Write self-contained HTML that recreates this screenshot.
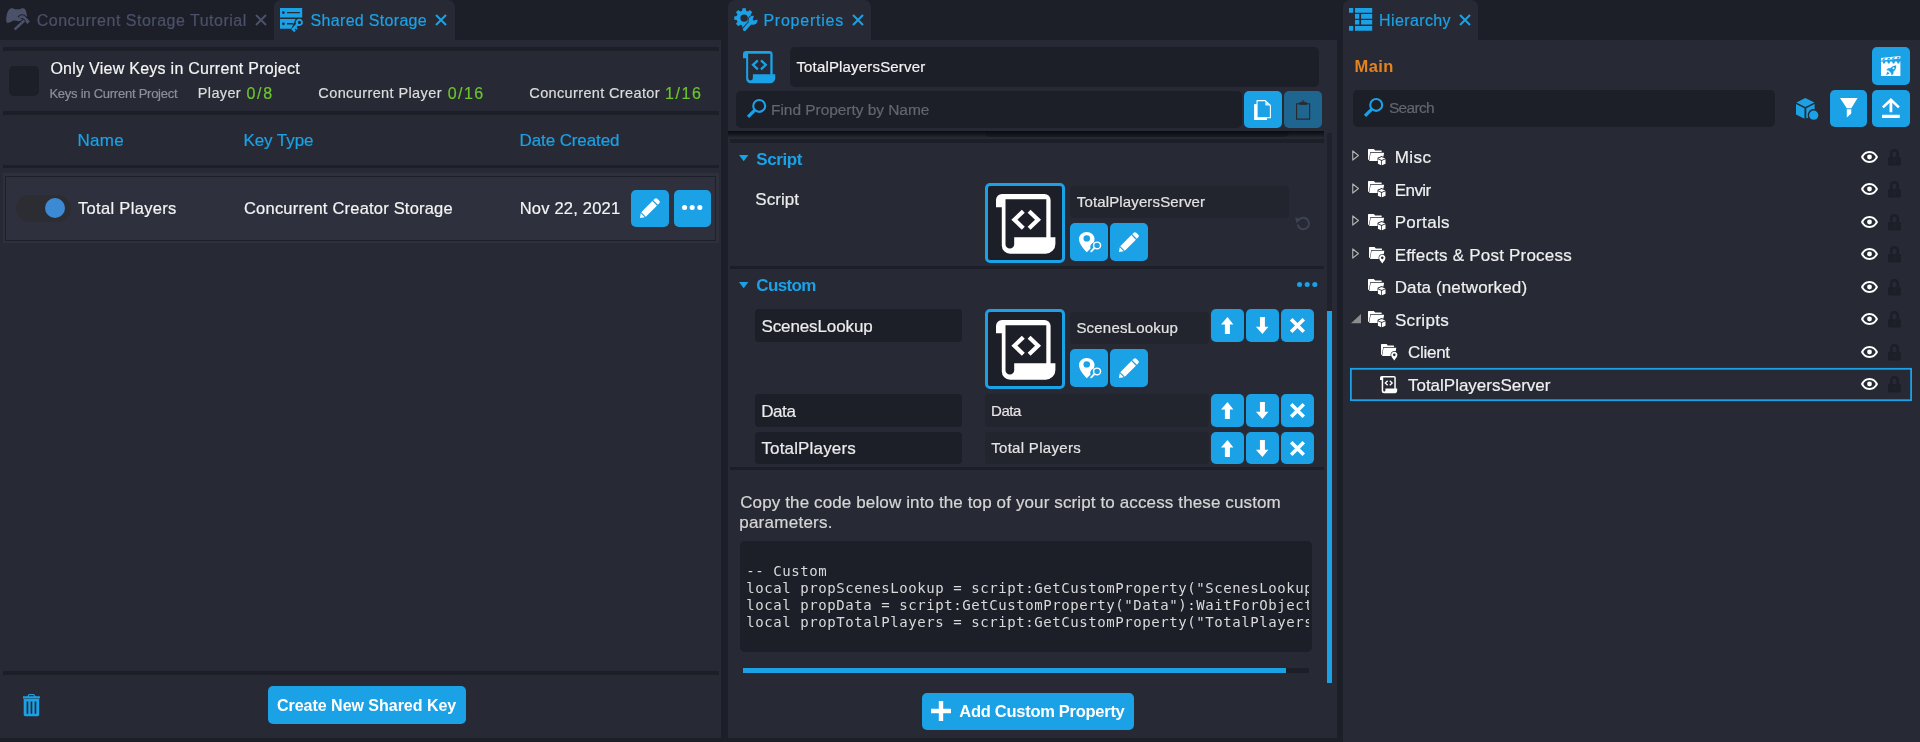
<!DOCTYPE html>
<html><head><meta charset="utf-8"><title>Editor</title>
<style>
html,body{margin:0;padding:0;}
body{width:1920px;height:742px;overflow:hidden;background:#1c1e28;position:relative;font-family:"Liberation Sans", sans-serif;}
#root{will-change:transform;position:absolute;left:0;top:0;width:1920px;height:742px;overflow:hidden;}
#root>div{position:absolute;box-sizing:border-box;}
#root>span{position:absolute;white-space:nowrap;line-height:20px;-webkit-text-stroke:0.2px;}
#root>svg{position:absolute;overflow:visible;}
#root>pre{position:absolute;margin:0;font-family:"DejaVu Sans Mono", "Liberation Mono", monospace;white-space:pre;overflow:hidden;}
</style></head><body><div id="root">
<div style="left:0px;top:40px;width:721px;height:698px;background:#272a34;"></div>
<div style="left:274px;top:0px;width:181px;height:41px;background:#272a34;border-radius:7px 7px 0 0;"></div>
<div style="left:3px;top:47px;width:716px;height:4px;background:#1c1e28;"></div>
<div style="left:3px;top:111px;width:716px;height:4px;background:#1c1e28;"></div>
<div style="left:3px;top:165px;width:716px;height:3px;background:#1c1e28;"></div>
<div style="left:3px;top:671px;width:716px;height:4px;background:#1c1e28;"></div>
<div style="left:9px;top:66px;width:30px;height:30px;background:#1c1e28;border-radius:5px;"></div>
<div style="left:3px;top:173px;width:716px;height:70px;background:#2e313c;"></div>
<div style="left:5.3px;top:176px;width:711.2px;height:65px;background:#2e313d;border:1.6px solid #1e2029;"></div>
<div style="left:16px;top:194.5px;width:55px;height:27.8px;background:#2c2d33;border-radius:14px;"></div>
<div style="left:44.9px;top:197.7px;width:20.6px;height:20.6px;background:#3c8ad3;border-radius:50%;"></div>
<div style="left:631px;top:190px;width:38px;height:37px;background:#1ba1e6;border-radius:5px;"></div>
<div style="left:674px;top:190px;width:37px;height:37px;background:#1ba1e6;border-radius:5px;"></div>
<div style="left:268px;top:686px;width:198px;height:38px;background:#1ba1e6;border-radius:5px;"></div>
<div style="left:728px;top:40px;width:609px;height:698px;background:#272a34;"></div>
<div style="left:728px;top:0px;width:143px;height:41px;background:#272a34;border-radius:7px 7px 0 0;"></div>
<div style="left:985px;top:120px;width:304px;height:16.6px;background:#1d1f29;border-radius:0 0 5px 5px;"></div>
<div style="left:728px;top:118px;width:600px;height:13px;background:#272a34;"></div>
<div style="left:728px;top:131px;width:596px;height:7px;background:transparent;background:linear-gradient(rgba(8,9,13,.9),rgba(8,9,13,.45) 55%,rgba(8,9,13,0));"></div>
<div style="left:790px;top:47px;width:529px;height:40px;background:#1c1e28;border-radius:5px;"></div>
<div style="left:736px;top:91px;width:506px;height:37px;background:#1c1e28;border-radius:5px;"></div>
<div style="left:1244px;top:91px;width:38px;height:37px;background:#1ba1e6;border-radius:5px;"></div>
<div style="left:1284px;top:91px;width:38px;height:37px;background:#1e6690;border-radius:5px;"></div>
<div style="left:730px;top:139px;width:594px;height:4px;background:#1c1e28;"></div>
<div style="left:730px;top:266px;width:594px;height:3px;background:#1c1e28;"></div>
<div style="left:730px;top:467px;width:594px;height:3px;background:#1c1e28;"></div>
<div style="left:1327px;top:133px;width:5px;height:178px;background:#1f212b;"></div>
<div style="left:1327px;top:311px;width:5px;height:372px;background:#1ba1e6;"></div>
<div style="left:985px;top:183px;width:80px;height:80px;background:#1c1e28;border:3px solid #1ba1e6;border-radius:5px;"></div>
<div style="left:985px;top:309px;width:80px;height:80px;background:#1c1e28;border:3px solid #1ba1e6;border-radius:5px;"></div>
<div style="left:1070px;top:186px;width:219px;height:32px;background:#22242e;border-radius:4px;"></div>
<div style="left:1070px;top:312px;width:139px;height:32px;background:#22242e;border-radius:4px;"></div>
<div style="left:1070px;top:223px;width:38px;height:38px;background:#1ba1e6;border-radius:5px;"></div>
<div style="left:1110px;top:223px;width:38px;height:38px;background:#1ba1e6;border-radius:5px;"></div>
<div style="left:1070px;top:349px;width:38px;height:38px;background:#1ba1e6;border-radius:5px;"></div>
<div style="left:1110px;top:349px;width:38px;height:38px;background:#1ba1e6;border-radius:5px;"></div>
<div style="left:755px;top:309px;width:207px;height:33px;background:#1c1e28;border-radius:4px;"></div>
<div style="left:1211px;top:309px;width:33px;height:33px;background:#1ba1e6;border-radius:5px;"></div>
<div style="left:1246px;top:309px;width:33px;height:33px;background:#1ba1e6;border-radius:5px;"></div>
<div style="left:1281px;top:309px;width:33px;height:33px;background:#1ba1e6;border-radius:5px;"></div>
<div style="left:755px;top:394px;width:207px;height:33px;background:#1c1e28;border-radius:4px;"></div>
<div style="left:1211px;top:394px;width:33px;height:33px;background:#1ba1e6;border-radius:5px;"></div>
<div style="left:1246px;top:394px;width:33px;height:33px;background:#1ba1e6;border-radius:5px;"></div>
<div style="left:1281px;top:394px;width:33px;height:33px;background:#1ba1e6;border-radius:5px;"></div>
<div style="left:755px;top:432px;width:207px;height:32px;background:#1c1e28;border-radius:4px;"></div>
<div style="left:1211px;top:432px;width:33px;height:32px;background:#1ba1e6;border-radius:5px;"></div>
<div style="left:1246px;top:432px;width:33px;height:32px;background:#1ba1e6;border-radius:5px;"></div>
<div style="left:1281px;top:432px;width:33px;height:32px;background:#1ba1e6;border-radius:5px;"></div>
<div style="left:985px;top:394px;width:224px;height:33px;background:#22242e;border-radius:4px;"></div>
<div style="left:985px;top:432px;width:224px;height:32px;background:#22242e;border-radius:4px;"></div>
<div style="left:740px;top:541px;width:572px;height:111px;background:#1c1e28;border-radius:5px;"></div>
<div style="left:743px;top:668px;width:566px;height:5px;background:#1c1e28;"></div>
<div style="left:743px;top:668px;width:543px;height:5px;background:#1ba1e6;"></div>
<div style="left:922px;top:693px;width:212px;height:37px;background:#1ba1e6;border-radius:5px;"></div>
<div style="left:1343px;top:40px;width:577px;height:702px;background:#272a34;"></div>
<div style="left:1343px;top:0px;width:135px;height:41px;background:#272a34;border-radius:7px 7px 0 0;"></div>
<div style="left:1872px;top:47px;width:38px;height:38px;background:#1ba1e6;border-radius:5px;"></div>
<div style="left:1353px;top:90px;width:422px;height:37px;background:#1c1e28;border-radius:5px;"></div>
<div style="left:1830px;top:90px;width:37px;height:37px;background:#1ba1e6;border-radius:5px;"></div>
<div style="left:1872px;top:90px;width:38px;height:37px;background:#1ba1e6;border-radius:5px;"></div>
<pre style="left:746.2px;top:563px;width:562.8px;height:72px;font-size:14px;letter-spacing:0.571px;line-height:17px;color:#dadada;">-- Custom
local propScenesLookup = script:GetCustomProperty("ScenesLookup"):WaitForObject()
local propData = script:GetCustomProperty("Data"):WaitForObject()
local propTotalPlayers = script:GetCustomProperty("TotalPlayers")</pre>
<svg style="left:1349px;top:366px;width:565px;height:37px;" viewBox="1349 366 565 37"><rect x="1350.9" y="368.8" width="560.2" height="31.4" fill="none" stroke="#1ba1e6" stroke-width="1.8"/></svg>
<svg style="left:5.9px;top:8.3px;width:24px;height:22px;color:#4b5169;" viewBox="0 0 24 22" preserveAspectRatio="none" fill="currentColor"><path d="M4.5 0.6 C6.5 -0.2 8 0.8 8.6 1.2 L14.2 1.2 C15 0.5 16.8 -0.2 18.3 0.6 C20.3 2 20.9 6.5 21.1 10.4 L17.5 12.6 L12 13.2 C10.4 12.4 7.8 12.4 6.5 13 C4.8 13.9 3.2 14.9 1.5 14.9 C-0.5 14.3 0.2 8.5 1.2 5.2 C1.8 3.2 3 1.3 4.5 0.6 Z"/><g fill="none" stroke="#1c1e28"><path d="M8.6 21.5 L18.3 12.5" stroke-width="4.4"/><path d="M13.7 10 C14.6 8.3 17 8.2 18.4 9.6 L22.2 13.4" stroke-width="4.6"/></g><g fill="none" stroke="currentColor"><path d="M8.6 21.5 L18.3 12.5" stroke-width="2.5"/><path d="M13.7 10 C14.6 8.3 17 8.2 18.4 9.6 L21.4 12.6" stroke-width="2.6"/></g><path d="M21.7 11.2 L23.9 13.4 L21.4 15.9 L19.2 13.7 Z"/></svg>
<svg style="left:280px;top:8px;width:23px;height:25px;color:#1ba1e6;" viewBox="0 0 23 25" preserveAspectRatio="none" fill="currentColor"><path fill-rule="evenodd" d="M0 0 H22.2 V9.4 H0 Z M2 4.6 a1.4 1.4 0 1 0 2.8 0 a1.4 1.4 0 1 0 -2.8 0 Z M7 3.9 H19.8 V5.3 H7 Z"/><path fill-rule="evenodd" d="M0 11.1 H15.6 L14.2 14.6 L11.2 20.7 H0 Z M2 15.8 a1.4 1.4 0 1 0 2.8 0 a1.4 1.4 0 1 0 -2.8 0 Z M7 15.1 H13.2 V16.5 H7 Z"/><path fill-rule="evenodd" d="M19.4 10.8 a3.6 3.6 0 1 1 -1.5 6.9 L16.6 19.2 L17.8 20.4 L16.5 21.7 L15.3 20.6 L14.6 21.4 L15.8 22.6 L14.3 24.2 L11.2 21.2 L16 16 A3.6 3.6 0 0 1 19.4 10.8 Z M19.5 12.8 a1.6 1.6 0 1 0 0 3.2 a1.6 1.6 0 1 0 0 -3.2 Z"/></svg>
<svg style="left:254.6px;top:13.5px;width:12px;height:12px;color:#4b5169;" viewBox="0 0 12 12" preserveAspectRatio="none" fill="currentColor"><path d="M1 1 L11 11 M11 1 L1 11" stroke="currentColor" stroke-width="2" fill="none"/></svg>
<svg style="left:434.6px;top:13.5px;width:12px;height:12px;color:#1ba1e6;" viewBox="0 0 12 12" preserveAspectRatio="none" fill="currentColor"><path d="M1 1 L11 11 M11 1 L1 11" stroke="currentColor" stroke-width="2" fill="none"/></svg>
<svg style="left:640px;top:198px;width:20px;height:20px;color:#fff;" viewBox="0 0 22 22" preserveAspectRatio="none" fill="currentColor"><path d="M16.2 0.8 C17 0 18.2 0 19 0.8 L21.2 3 C22 3.8 22 5 21.2 5.8 L19.6 7.4 L14.6 2.4 Z M13.6 3.4 L18.6 8.4 L6.4 20.6 L1.4 15.6 Z M0.8 16.8 L5.2 21.2 L0 22 Z"/></svg>
<svg style="left:681.8px;top:205.2px;width:20.4px;height:5px;color:#fff;" viewBox="0 0 20 5" preserveAspectRatio="none" fill="currentColor"><circle cx="2.5" cy="2.5" r="2.5"/><circle cx="10" cy="2.5" r="2.5"/><circle cx="17.5" cy="2.5" r="2.5"/></svg>
<svg style="left:23.3px;top:693.8px;width:16.9px;height:22.2px;color:#1ba1e6;" viewBox="0 0 16.9 22.2" preserveAspectRatio="none" fill="currentColor"><path fill-rule="evenodd" d="M5.9 0 H11 L12.6 2.2 H16.9 V4.5 H0 V2.2 H4.3 Z M6.5 1 L5.8 2.2 H11.1 L10.4 1 Z M0.7 5.1 H16.2 V20.6 C16.2 21.6 15.6 22.2 14.6 22.2 H2.3 C1.3 22.2 0.7 21.6 0.7 20.6 Z M3.6 7.4 V19.8 H5.3 V7.4 Z M7.6 7.4 V19.8 H9.3 V7.4 Z M11.6 7.4 V19.8 H13.3 V7.4 Z"/></svg>
<svg style="left:995.8px;top:193.5px;width:59.5px;height:59.7px;color:#fff;" viewBox="0 0 59.5 59.7" preserveAspectRatio="none" fill="currentColor"><path fill-rule="evenodd" d="M6 0 H48.5 A6.1 6.1 0 0 1 54.6 6.1 V43.3 H59.4 V50 A9.7 9.7 0 0 1 49.7 59.7 H14 A8.2 8.2 0 0 1 5.8 51.5 V13.3 H0 V6 A6 6 0 0 1 6 0 Z M9.5 5.3 V50.2 A4.35 4.35 0 0 0 18.2 50.2 V43.3 H50.3 V5.3 Z"/><path d="M27.3 17.3 L18.4 25.7 L27.3 34.2 M33.1 17.3 L42 25.7 L33.1 34.2" fill="none" stroke="currentColor" stroke-width="4.2"/></svg>
<svg style="left:995.8px;top:319.5px;width:59.5px;height:59.7px;color:#fff;" viewBox="0 0 59.5 59.7" preserveAspectRatio="none" fill="currentColor"><path fill-rule="evenodd" d="M6 0 H48.5 A6.1 6.1 0 0 1 54.6 6.1 V43.3 H59.4 V50 A9.7 9.7 0 0 1 49.7 59.7 H14 A8.2 8.2 0 0 1 5.8 51.5 V13.3 H0 V6 A6 6 0 0 1 6 0 Z M9.5 5.3 V50.2 A4.35 4.35 0 0 0 18.2 50.2 V43.3 H50.3 V5.3 Z"/><path d="M27.3 17.3 L18.4 25.7 L27.3 34.2 M33.1 17.3 L42 25.7 L33.1 34.2" fill="none" stroke="currentColor" stroke-width="4.2"/></svg>
<svg style="left:1079px;top:232px;width:23.3px;height:20.2px;color:#fff;" viewBox="0 0 24 22" preserveAspectRatio="none" fill="currentColor"><path fill-rule="evenodd" d="M8 0 C12.4 0 16 3.4 16 7.6 C16 9 15.6 10.4 15 11.6 C13 12.2 11.6 14 11.6 16.2 C11.6 16.8 11.7 17.4 11.9 17.9 L8 22 C5 18.6 0 13 0 7.6 C0 3.4 3.6 0 8 0 Z M8 3.6 a3.4 3.4 0 1 0 0 6.8 a3.4 3.4 0 1 0 0 -6.8 Z"/><circle cx="18.6" cy="14.6" r="3.6" fill="none" stroke="currentColor" stroke-width="1.5"/><path d="M16 17.4 L12.6 21" stroke="currentColor" stroke-width="2" stroke-linecap="round"/></svg>
<svg style="left:1119px;top:232px;width:20px;height:20px;color:#fff;" viewBox="0 0 22 22" preserveAspectRatio="none" fill="currentColor"><path d="M16.2 0.8 C17 0 18.2 0 19 0.8 L21.2 3 C22 3.8 22 5 21.2 5.8 L19.6 7.4 L14.6 2.4 Z M13.6 3.4 L18.6 8.4 L6.4 20.6 L1.4 15.6 Z M0.8 16.8 L5.2 21.2 L0 22 Z"/></svg>
<svg style="left:1079px;top:358px;width:23.3px;height:20.2px;color:#fff;" viewBox="0 0 24 22" preserveAspectRatio="none" fill="currentColor"><path fill-rule="evenodd" d="M8 0 C12.4 0 16 3.4 16 7.6 C16 9 15.6 10.4 15 11.6 C13 12.2 11.6 14 11.6 16.2 C11.6 16.8 11.7 17.4 11.9 17.9 L8 22 C5 18.6 0 13 0 7.6 C0 3.4 3.6 0 8 0 Z M8 3.6 a3.4 3.4 0 1 0 0 6.8 a3.4 3.4 0 1 0 0 -6.8 Z"/><circle cx="18.6" cy="14.6" r="3.6" fill="none" stroke="currentColor" stroke-width="1.5"/><path d="M16 17.4 L12.6 21" stroke="currentColor" stroke-width="2" stroke-linecap="round"/></svg>
<svg style="left:1119px;top:358px;width:20px;height:20px;color:#fff;" viewBox="0 0 22 22" preserveAspectRatio="none" fill="currentColor"><path d="M16.2 0.8 C17 0 18.2 0 19 0.8 L21.2 3 C22 3.8 22 5 21.2 5.8 L19.6 7.4 L14.6 2.4 Z M13.6 3.4 L18.6 8.4 L6.4 20.6 L1.4 15.6 Z M0.8 16.8 L5.2 21.2 L0 22 Z"/></svg>
<svg style="left:1211px;top:309.0px;width:33px;height:33px;color:#fff;" viewBox="0 0 33 33" preserveAspectRatio="none" fill="currentColor"><path d="M16.5 8 L22.4 15.4 H18.9 V24.9 H13.9 V15.4 H10 Z"/></svg>
<svg style="left:1246px;top:309.0px;width:33px;height:33px;color:#fff;" viewBox="0 0 33 33" preserveAspectRatio="none" fill="currentColor"><path d="M16.4 24.9 L22.4 17.7 H18.9 V8 H13.95 V17.7 H9.9 Z"/></svg>
<svg style="left:1281px;top:309.0px;width:33px;height:33px;color:#fff;" viewBox="0 0 33 33" preserveAspectRatio="none" fill="currentColor"><path d="M10.15 10.25 L22.75 22.85 M22.75 10.25 L10.15 22.85" stroke="currentColor" stroke-width="3.6" fill="none"/></svg>
<svg style="left:1211px;top:394.0px;width:33px;height:33px;color:#fff;" viewBox="0 0 33 33" preserveAspectRatio="none" fill="currentColor"><path d="M16.5 8 L22.4 15.4 H18.9 V24.9 H13.9 V15.4 H10 Z"/></svg>
<svg style="left:1246px;top:394.0px;width:33px;height:33px;color:#fff;" viewBox="0 0 33 33" preserveAspectRatio="none" fill="currentColor"><path d="M16.4 24.9 L22.4 17.7 H18.9 V8 H13.95 V17.7 H9.9 Z"/></svg>
<svg style="left:1281px;top:394.0px;width:33px;height:33px;color:#fff;" viewBox="0 0 33 33" preserveAspectRatio="none" fill="currentColor"><path d="M10.15 10.25 L22.75 22.85 M22.75 10.25 L10.15 22.85" stroke="currentColor" stroke-width="3.6" fill="none"/></svg>
<svg style="left:1211px;top:431.5px;width:33px;height:33px;color:#fff;" viewBox="0 0 33 33" preserveAspectRatio="none" fill="currentColor"><path d="M16.5 8 L22.4 15.4 H18.9 V24.9 H13.9 V15.4 H10 Z"/></svg>
<svg style="left:1246px;top:431.5px;width:33px;height:33px;color:#fff;" viewBox="0 0 33 33" preserveAspectRatio="none" fill="currentColor"><path d="M16.4 24.9 L22.4 17.7 H18.9 V8 H13.95 V17.7 H9.9 Z"/></svg>
<svg style="left:1281px;top:431.5px;width:33px;height:33px;color:#fff;" viewBox="0 0 33 33" preserveAspectRatio="none" fill="currentColor"><path d="M10.15 10.25 L22.75 22.85 M22.75 10.25 L10.15 22.85" stroke="currentColor" stroke-width="3.6" fill="none"/></svg>
<svg style="left:734px;top:8px;width:24px;height:24px;color:#1ba1e6;" viewBox="0 0 24 24" preserveAspectRatio="none" fill="currentColor"><path fill-rule="evenodd" d="M8.12 2.66 L8.41 0.24 L11.79 0.24 L12.08 2.66 L13.96 3.44 L15.87 1.93 L18.27 4.33 L16.76 6.24 L17.54 8.12 L19.96 8.41 L19.96 11.79 L17.54 12.08 L16.76 13.96 L18.27 15.87 L15.87 18.27 L13.96 16.76 L12.08 17.54 L11.79 19.96 L8.41 19.96 L8.12 17.54 L6.24 16.76 L4.33 18.27 L1.93 15.87 L3.44 13.96 L2.66 12.08 L0.24 11.79 L0.24 8.41 L2.66 8.12 L3.44 6.24 L1.93 4.33 L4.33 1.93 L6.24 3.44 Z M6.40 10.10 a3.7 3.7 0 1 0 7.4 0 a3.7 3.7 0 1 0 -7.4 0 Z"/><g stroke="#272a34" stroke-width="1.6" fill="#272a34"><path d="M10.5 21.3 L18 13" stroke-width="5" stroke-linecap="round" fill="none"/><circle cx="19" cy="12.2" r="4.6"/></g><path d="M10.5 21.3 L18 13" stroke="currentColor" stroke-width="3.4" stroke-linecap="round" fill="none"/><circle cx="19" cy="12.2" r="4.5"/><path d="M19.6 11.6 L21.2 6.4 L25.4 10.2 Z" fill="#272a34" stroke="#272a34" stroke-width="1.6" stroke-linejoin="round"/></svg>
<svg style="left:851.5px;top:13.5px;width:12px;height:12px;color:#1ba1e6;" viewBox="0 0 12 12" preserveAspectRatio="none" fill="currentColor"><path d="M1 1 L11 11 M11 1 L1 11" stroke="currentColor" stroke-width="2" fill="none"/></svg>
<svg style="left:742.9px;top:50.9px;width:32.3px;height:32.2px;color:#1ba1e6;" viewBox="0 0 59.5 59.7" preserveAspectRatio="none" fill="currentColor"><path fill-rule="evenodd" d="M6 0 H48.5 A6.1 6.1 0 0 1 54.6 6.1 V43.3 H59.4 V50 A9.7 9.7 0 0 1 49.7 59.7 H14 A8.2 8.2 0 0 1 5.8 51.5 V13.3 H0 V6 A6 6 0 0 1 6 0 Z M9.5 5.3 V50.2 A4.35 4.35 0 0 0 18.2 50.2 V43.3 H50.3 V5.3 Z"/><path d="M27.3 17.3 L18.4 25.7 L27.3 34.2 M33.1 17.3 L42 25.7 L33.1 34.2" fill="none" stroke="currentColor" stroke-width="4.2"/></svg>
<svg style="left:747px;top:98px;width:20px;height:20px;color:#1ba1e6;" viewBox="0 0 20 20" preserveAspectRatio="none" fill="currentColor"><circle cx="12.2" cy="7.9" r="5.95" fill="none" stroke="currentColor" stroke-width="2.1"/><path d="M7.6 12.4 L1 18.9" stroke="currentColor" stroke-width="3.3" fill="none"/></svg>
<svg style="left:1254px;top:100px;width:17px;height:20px;color:#fff;" viewBox="0 0 17 20" preserveAspectRatio="none" fill="currentColor"><path d="M0.1 4.1 H12.9 V20 H0.1 Z"/><path d="M3.05 0.65 H11.3 L16.4 5.5 V17.7 H3.05 Z" fill="#1ba1e6" stroke="currentColor" stroke-width="1.1" stroke-linejoin="round"/><path d="M11.3 0.9 V5.5 H16.2 Z" fill="rgba(255,255,255,.8)"/></svg>
<svg style="left:1296px;top:100px;width:15px;height:20px;color:#2a292e;" viewBox="0 0 15 20" preserveAspectRatio="none" fill="currentColor"><path d="M0.6 3.7 H13.6 V19.1 H0.6 Z" fill="none" stroke="currentColor" stroke-width="1.15"/><path d="M3.2 2.2 H11 V4.8 H3.2 Z"/><circle cx="7.1" cy="1.4" r="0.95" fill="none" stroke="currentColor" stroke-width="0.8"/></svg>
<svg style="left:739.3px;top:154.9px;width:9.4px;height:6.3px;color:#1ba1e6;" viewBox="0 0 10 7" preserveAspectRatio="none" fill="currentColor"><path d="M0 0 H10 L5 7 Z"/></svg>
<svg style="left:739.3px;top:281.7px;width:9.4px;height:6.3px;color:#1ba1e6;" viewBox="0 0 10 7" preserveAspectRatio="none" fill="currentColor"><path d="M0 0 H10 L5 7 Z"/></svg>
<svg style="left:1294.9px;top:215.7px;width:15.2px;height:14.4px;color:#3d4254;" viewBox="0 0 15.2 14.4" preserveAspectRatio="none" fill="currentColor"><path d="M3.63 4.23 A5.7 5.7 0 1 1 2.69 8.49" fill="none" stroke="currentColor" stroke-width="1.9"/><path d="M0.2 1.2 L5.8 3.3 L1.5 7.2 Z"/></svg>
<svg style="left:1296.7px;top:282px;width:20.4px;height:5px;color:#1ba1e6;" viewBox="0 0 20 5" preserveAspectRatio="none" fill="currentColor"><circle cx="2.5" cy="2.5" r="2.5"/><circle cx="10" cy="2.5" r="2.5"/><circle cx="17.5" cy="2.5" r="2.5"/></svg>
<svg style="left:931px;top:701px;width:20px;height:20px;color:#fff;" viewBox="0 0 20 20" preserveAspectRatio="none" fill="currentColor"><path d="M7.8 0 H12.2 V7.8 H20 V12.2 H12.2 V20 H7.8 V12.2 H0 V7.8 H7.8 Z"/></svg>
<svg style="left:1348.9px;top:8.1px;width:23.2px;height:22.7px;color:#1ba1e6;" viewBox="0 0 23.2 22.7" preserveAspectRatio="none" fill="currentColor"><path d="M0 0 H4.2 V4.8 H0 Z M6 0 H23.2 V4.8 H6 Z M6 6.1 H10.3 V10.7 H6 Z M12.1 6.1 H23.2 V10.7 H12.1 Z M6 12 H10.3 V16.6 H6 Z M12.1 12 H23.2 V16.6 H12.1 Z M0 18 H4.2 V22.7 H0 Z M6 18 H23.2 V22.7 H6 Z"/></svg>
<svg style="left:1458.8px;top:13.5px;width:12px;height:12px;color:#1ba1e6;" viewBox="0 0 12 12" preserveAspectRatio="none" fill="currentColor"><path d="M1 1 L11 11 M11 1 L1 11" stroke="currentColor" stroke-width="2" fill="none"/></svg>
<svg style="left:1880.8px;top:56px;width:19.4px;height:20px;color:#fff;" viewBox="0 0 19.4 20" preserveAspectRatio="none" fill="currentColor"><path fill-rule="evenodd" d="M0 1.9 L19.4 -0.1 V2.5 L0 4.5 Z M2.20 2.47 L4.60 2.23 L3.60 3.83 L1.20 4.08 Z M7.00 1.98 L9.40 1.73 L8.40 3.33 L6.00 3.58 Z M11.80 1.48 L14.20 1.24 L13.20 2.84 L10.80 3.09 Z M16.60 0.99 L19.00 0.74 L18.00 2.34 L15.60 2.59 Z"/><path fill-rule="evenodd" d="M0 5.6 H19.4 V20 H0 Z M1.50 5.4 L2.20 7.6 H3.70 L4.40 5.4 Z M6.30 5.4 L7.00 7.6 H8.50 L9.20 5.4 Z M11.10 5.4 L11.80 7.6 H13.30 L14.00 5.4 Z M15.90 5.4 L16.60 7.6 H18.10 L18.80 5.4 Z M15.2 9.4 C12.8 9.3 10.6 10.4 9.3 12.2 L7 12.3 L5.3 14.3 L7.6 14.6 L10.2 17.2 L10.5 19.4 L12.4 17.8 L12.5 15.5 C14.4 14.2 15.5 12 15.2 9.4 Z M12.5 11.2 a1 1 0 1 0 0 2 a1 1 0 1 0 0 -2 Z M6.6 15.6 L5 19 L8.6 17.8 Z"/></svg>
<svg style="left:1364px;top:97px;width:20px;height:20px;color:#1ba1e6;" viewBox="0 0 20 20" preserveAspectRatio="none" fill="currentColor"><circle cx="12.2" cy="7.9" r="5.95" fill="none" stroke="currentColor" stroke-width="2.1"/><path d="M7.6 12.4 L1 18.9" stroke="currentColor" stroke-width="3.3" fill="none"/></svg>
<svg style="left:1795.7px;top:97.5px;width:22.3px;height:21.9px;color:#1ba1e6;" viewBox="0 0 22.3 21.9" preserveAspectRatio="none" fill="currentColor"><path d="M9.3 0 L18.4 4.6 L9.3 9 L0.4 4.6 Z M0 6 L8.5 10.3 V20.8 L0 16.4 Z M10.3 10.3 L18.6 6 V11.2 C15 10.6 11.8 13.4 11.8 17.2 C11.8 18 11.9 18.6 12.2 19.4 L10.3 20.6 Z"/><circle cx="17.7" cy="17.2" r="4.6"/></svg>
<svg style="left:1839.8px;top:98px;width:17.6px;height:19.4px;color:#fff;" viewBox="0 0 17.6 19.4" preserveAspectRatio="none" fill="currentColor"><path d="M0 0 H17.6 L11.3 10.2 H6.8 Z M6.8 11.3 H11.3 V15.6 L6.8 19.4 Z"/></svg>
<svg style="left:1882px;top:98px;width:17.8px;height:20px;color:#fff;" viewBox="0 0 17.8 20" preserveAspectRatio="none" fill="currentColor"><path d="M0.9 9.4 L8.9 1.8 L16.9 9.4" fill="none" stroke="currentColor" stroke-width="2.6"/><path d="M7.5 2.5 H10.3 V14.3 H7.5 Z M0 16.8 H17.8 V20 H0 Z"/></svg>
<svg style="left:1352px;top:150.3px;width:7.4px;height:11px;color:#b4b4b4;" viewBox="0 0 8 11" preserveAspectRatio="none" fill="currentColor"><path d="M0.8 0.9 L7 5.5 L0.8 10.1 Z" fill="none" stroke="currentColor" stroke-width="1.2" stroke-linejoin="round"/></svg>
<svg style="left:1368.0px;top:148.8px;width:17.5px;height:16.5px;color:#fff;" viewBox="0 0 18 17" preserveAspectRatio="none" fill="currentColor"><path d="M0 0.6 C0 0.2 0.3 0 0.6 0 H6 L7.4 1.6 H14 V3 H2.4 L1 11 H0 Z"/><path d="M2.8 3.8 H16.6 L15.8 8 L14 7.2 L9.8 9 V12.4 H1.2 Z"/><path d="M14 8.2 L17.8 9.8 L14 11.4 L10.4 9.8 Z M10.2 10.6 L13.6 12.2 V16.8 L10.2 15.2 Z M14.4 12.2 L18 10.6 V15.2 L14.4 16.8 Z"/></svg>
<svg style="left:1861px;top:151.2px;width:17px;height:12px;color:#fff;" viewBox="0 0 17 12" preserveAspectRatio="none" fill="currentColor"><path fill-rule="evenodd" d="M8.5 0 C12.6 0 15.6 2.8 17 6 C15.6 9.2 12.6 12 8.5 12 C4.4 12 1.4 9.2 0 6 C1.4 2.8 4.4 0 8.5 0 Z M8.5 2 C5.8 2 3.4 3.6 2.3 6 C3.4 8.4 5.8 10 8.5 10 C11.2 10 13.6 8.4 14.7 6 C13.6 3.6 11.2 2 8.5 2 Z"/><circle cx="8.5" cy="6" r="2.4"/></svg>
<svg style="left:1888.1px;top:149.2px;width:12.9px;height:16.6px;color:#1c1e28;" viewBox="0 0 12.9 16.6" preserveAspectRatio="none" fill="currentColor"><path fill-rule="evenodd" d="M6.45 0 C9.2 0 11 1.9 11 4.6 V8.3 H1.9 V4.6 C1.9 1.9 3.7 0 6.45 0 Z M6.45 2.5 C5.2 2.5 4.5 3.4 4.5 4.7 V8.3 H8.4 V4.7 C8.4 3.4 7.7 2.5 6.45 2.5 Z"/><path fill-rule="evenodd" d="M1.4 8 H11.5 C12.3 8 12.9 8.6 12.9 9.4 V15.2 C12.9 16 12.3 16.6 11.5 16.6 H1.4 C0.6 16.6 0 16 0 15.2 V9.4 C0 8.6 0.6 8 1.4 8 Z"/><path d="M6.45 10.2 a1.1 1.1 0 0 1 0.55 2.05 V14.6 H5.9 V12.25 A1.1 1.1 0 0 1 6.45 10.2 Z" fill="#272a34" opacity=".55"/></svg>
<svg style="left:1352px;top:182.8px;width:7.4px;height:11px;color:#b4b4b4;" viewBox="0 0 8 11" preserveAspectRatio="none" fill="currentColor"><path d="M0.8 0.9 L7 5.5 L0.8 10.1 Z" fill="none" stroke="currentColor" stroke-width="1.2" stroke-linejoin="round"/></svg>
<svg style="left:1368.0px;top:181.3px;width:17.5px;height:16.5px;color:#fff;" viewBox="0 0 18 17" preserveAspectRatio="none" fill="currentColor"><path d="M0 0.6 C0 0.2 0.3 0 0.6 0 H6 L7.4 1.6 H14 V3 H2.4 L1 11 H0 Z"/><path d="M2.8 3.8 H16.6 L15.8 8 L14 7.2 L9.8 9 V12.4 H1.2 Z"/><path d="M14 8.2 L17.8 9.8 L14 11.4 L10.4 9.8 Z M10.2 10.6 L13.6 12.2 V16.8 L10.2 15.2 Z M14.4 12.2 L18 10.6 V15.2 L14.4 16.8 Z"/></svg>
<svg style="left:1861px;top:183.2px;width:17px;height:12px;color:#fff;" viewBox="0 0 17 12" preserveAspectRatio="none" fill="currentColor"><path fill-rule="evenodd" d="M8.5 0 C12.6 0 15.6 2.8 17 6 C15.6 9.2 12.6 12 8.5 12 C4.4 12 1.4 9.2 0 6 C1.4 2.8 4.4 0 8.5 0 Z M8.5 2 C5.8 2 3.4 3.6 2.3 6 C3.4 8.4 5.8 10 8.5 10 C11.2 10 13.6 8.4 14.7 6 C13.6 3.6 11.2 2 8.5 2 Z"/><circle cx="8.5" cy="6" r="2.4"/></svg>
<svg style="left:1888.1px;top:181.2px;width:12.9px;height:16.6px;color:#1c1e28;" viewBox="0 0 12.9 16.6" preserveAspectRatio="none" fill="currentColor"><path fill-rule="evenodd" d="M6.45 0 C9.2 0 11 1.9 11 4.6 V8.3 H1.9 V4.6 C1.9 1.9 3.7 0 6.45 0 Z M6.45 2.5 C5.2 2.5 4.5 3.4 4.5 4.7 V8.3 H8.4 V4.7 C8.4 3.4 7.7 2.5 6.45 2.5 Z"/><path fill-rule="evenodd" d="M1.4 8 H11.5 C12.3 8 12.9 8.6 12.9 9.4 V15.2 C12.9 16 12.3 16.6 11.5 16.6 H1.4 C0.6 16.6 0 16 0 15.2 V9.4 C0 8.6 0.6 8 1.4 8 Z"/><path d="M6.45 10.2 a1.1 1.1 0 0 1 0.55 2.05 V14.6 H5.9 V12.25 A1.1 1.1 0 0 1 6.45 10.2 Z" fill="#272a34" opacity=".55"/></svg>
<svg style="left:1352px;top:215.3px;width:7.4px;height:11px;color:#b4b4b4;" viewBox="0 0 8 11" preserveAspectRatio="none" fill="currentColor"><path d="M0.8 0.9 L7 5.5 L0.8 10.1 Z" fill="none" stroke="currentColor" stroke-width="1.2" stroke-linejoin="round"/></svg>
<svg style="left:1368.0px;top:213.8px;width:17.5px;height:16.5px;color:#fff;" viewBox="0 0 18 17" preserveAspectRatio="none" fill="currentColor"><path d="M0 0.6 C0 0.2 0.3 0 0.6 0 H6 L7.4 1.6 H14 V3 H2.4 L1 11 H0 Z"/><path d="M2.8 3.8 H16.6 L15.8 8 L14 7.2 L9.8 9 V12.4 H1.2 Z"/><path d="M14 8.2 L17.8 9.8 L14 11.4 L10.4 9.8 Z M10.2 10.6 L13.6 12.2 V16.8 L10.2 15.2 Z M14.4 12.2 L18 10.6 V15.2 L14.4 16.8 Z"/></svg>
<svg style="left:1861px;top:216.2px;width:17px;height:12px;color:#fff;" viewBox="0 0 17 12" preserveAspectRatio="none" fill="currentColor"><path fill-rule="evenodd" d="M8.5 0 C12.6 0 15.6 2.8 17 6 C15.6 9.2 12.6 12 8.5 12 C4.4 12 1.4 9.2 0 6 C1.4 2.8 4.4 0 8.5 0 Z M8.5 2 C5.8 2 3.4 3.6 2.3 6 C3.4 8.4 5.8 10 8.5 10 C11.2 10 13.6 8.4 14.7 6 C13.6 3.6 11.2 2 8.5 2 Z"/><circle cx="8.5" cy="6" r="2.4"/></svg>
<svg style="left:1888.1px;top:214.2px;width:12.9px;height:16.6px;color:#1c1e28;" viewBox="0 0 12.9 16.6" preserveAspectRatio="none" fill="currentColor"><path fill-rule="evenodd" d="M6.45 0 C9.2 0 11 1.9 11 4.6 V8.3 H1.9 V4.6 C1.9 1.9 3.7 0 6.45 0 Z M6.45 2.5 C5.2 2.5 4.5 3.4 4.5 4.7 V8.3 H8.4 V4.7 C8.4 3.4 7.7 2.5 6.45 2.5 Z"/><path fill-rule="evenodd" d="M1.4 8 H11.5 C12.3 8 12.9 8.6 12.9 9.4 V15.2 C12.9 16 12.3 16.6 11.5 16.6 H1.4 C0.6 16.6 0 16 0 15.2 V9.4 C0 8.6 0.6 8 1.4 8 Z"/><path d="M6.45 10.2 a1.1 1.1 0 0 1 0.55 2.05 V14.6 H5.9 V12.25 A1.1 1.1 0 0 1 6.45 10.2 Z" fill="#272a34" opacity=".55"/></svg>
<svg style="left:1352px;top:247.8px;width:7.4px;height:11px;color:#b4b4b4;" viewBox="0 0 8 11" preserveAspectRatio="none" fill="currentColor"><path d="M0.8 0.9 L7 5.5 L0.8 10.1 Z" fill="none" stroke="currentColor" stroke-width="1.2" stroke-linejoin="round"/></svg>
<svg style="left:1368.6px;top:246.5px;width:16.6px;height:16.5px;color:#fff;" viewBox="0 0 18 17" preserveAspectRatio="none" fill="currentColor"><path d="M0 0.6 C0 0.2 0.3 0 0.6 0 H6 L7.4 1.6 H14 V3 H2.4 L1 11 H0 Z"/><path d="M2.8 3.8 H16.6 L16 7.4 C13.4 6.4 10.4 8.2 10.4 11.2 L10.5 12.4 H1.2 Z"/><path fill-rule="evenodd" d="M14.4 8 C16.4 8 17.8 9.4 17.8 11.2 C17.8 13.2 15.8 15.4 14.4 17 C13 15.4 11 13.2 11 11.2 C11 9.4 12.4 8 14.4 8 Z M14.4 9.8 a1.4 1.4 0 1 0 0 2.8 a1.4 1.4 0 1 0 0 -2.8 Z"/></svg>
<svg style="left:1861px;top:248.2px;width:17px;height:12px;color:#fff;" viewBox="0 0 17 12" preserveAspectRatio="none" fill="currentColor"><path fill-rule="evenodd" d="M8.5 0 C12.6 0 15.6 2.8 17 6 C15.6 9.2 12.6 12 8.5 12 C4.4 12 1.4 9.2 0 6 C1.4 2.8 4.4 0 8.5 0 Z M8.5 2 C5.8 2 3.4 3.6 2.3 6 C3.4 8.4 5.8 10 8.5 10 C11.2 10 13.6 8.4 14.7 6 C13.6 3.6 11.2 2 8.5 2 Z"/><circle cx="8.5" cy="6" r="2.4"/></svg>
<svg style="left:1888.1px;top:246.2px;width:12.9px;height:16.6px;color:#1c1e28;" viewBox="0 0 12.9 16.6" preserveAspectRatio="none" fill="currentColor"><path fill-rule="evenodd" d="M6.45 0 C9.2 0 11 1.9 11 4.6 V8.3 H1.9 V4.6 C1.9 1.9 3.7 0 6.45 0 Z M6.45 2.5 C5.2 2.5 4.5 3.4 4.5 4.7 V8.3 H8.4 V4.7 C8.4 3.4 7.7 2.5 6.45 2.5 Z"/><path fill-rule="evenodd" d="M1.4 8 H11.5 C12.3 8 12.9 8.6 12.9 9.4 V15.2 C12.9 16 12.3 16.6 11.5 16.6 H1.4 C0.6 16.6 0 16 0 15.2 V9.4 C0 8.6 0.6 8 1.4 8 Z"/><path d="M6.45 10.2 a1.1 1.1 0 0 1 0.55 2.05 V14.6 H5.9 V12.25 A1.1 1.1 0 0 1 6.45 10.2 Z" fill="#272a34" opacity=".55"/></svg>
<svg style="left:1368.0px;top:278.8px;width:17.5px;height:16.5px;color:#fff;" viewBox="0 0 18 17" preserveAspectRatio="none" fill="currentColor"><path d="M0 0.6 C0 0.2 0.3 0 0.6 0 H6 L7.4 1.6 H14 V3 H2.4 L1 11 H0 Z"/><path d="M2.8 3.8 H16.6 L15.8 8 L14 7.2 L9.8 9 V12.4 H1.2 Z"/><path d="M14 8.2 L17.8 9.8 L14 11.4 L10.4 9.8 Z M10.2 10.6 L13.6 12.2 V16.8 L10.2 15.2 Z M14.4 12.2 L18 10.6 V15.2 L14.4 16.8 Z"/></svg>
<svg style="left:1861px;top:281.2px;width:17px;height:12px;color:#fff;" viewBox="0 0 17 12" preserveAspectRatio="none" fill="currentColor"><path fill-rule="evenodd" d="M8.5 0 C12.6 0 15.6 2.8 17 6 C15.6 9.2 12.6 12 8.5 12 C4.4 12 1.4 9.2 0 6 C1.4 2.8 4.4 0 8.5 0 Z M8.5 2 C5.8 2 3.4 3.6 2.3 6 C3.4 8.4 5.8 10 8.5 10 C11.2 10 13.6 8.4 14.7 6 C13.6 3.6 11.2 2 8.5 2 Z"/><circle cx="8.5" cy="6" r="2.4"/></svg>
<svg style="left:1888.1px;top:279.2px;width:12.9px;height:16.6px;color:#1c1e28;" viewBox="0 0 12.9 16.6" preserveAspectRatio="none" fill="currentColor"><path fill-rule="evenodd" d="M6.45 0 C9.2 0 11 1.9 11 4.6 V8.3 H1.9 V4.6 C1.9 1.9 3.7 0 6.45 0 Z M6.45 2.5 C5.2 2.5 4.5 3.4 4.5 4.7 V8.3 H8.4 V4.7 C8.4 3.4 7.7 2.5 6.45 2.5 Z"/><path fill-rule="evenodd" d="M1.4 8 H11.5 C12.3 8 12.9 8.6 12.9 9.4 V15.2 C12.9 16 12.3 16.6 11.5 16.6 H1.4 C0.6 16.6 0 16 0 15.2 V9.4 C0 8.6 0.6 8 1.4 8 Z"/><path d="M6.45 10.2 a1.1 1.1 0 0 1 0.55 2.05 V14.6 H5.9 V12.25 A1.1 1.1 0 0 1 6.45 10.2 Z" fill="#272a34" opacity=".55"/></svg>
<svg style="left:1351px;top:313.6px;width:10px;height:9.2px;color:#8c8c8c;" viewBox="0 0 10 10" preserveAspectRatio="none" fill="currentColor"><path d="M10 0 V10 H0 Z"/></svg>
<svg style="left:1368.0px;top:311.3px;width:17.5px;height:16.5px;color:#fff;" viewBox="0 0 18 17" preserveAspectRatio="none" fill="currentColor"><path d="M0 0.6 C0 0.2 0.3 0 0.6 0 H6 L7.4 1.6 H14 V3 H2.4 L1 11 H0 Z"/><path d="M2.8 3.8 H16.6 L15.8 8 L14 7.2 L9.8 9 V12.4 H1.2 Z"/><path d="M14 8.2 L17.8 9.8 L14 11.4 L10.4 9.8 Z M10.2 10.6 L13.6 12.2 V16.8 L10.2 15.2 Z M14.4 12.2 L18 10.6 V15.2 L14.4 16.8 Z"/></svg>
<svg style="left:1861px;top:313.2px;width:17px;height:12px;color:#fff;" viewBox="0 0 17 12" preserveAspectRatio="none" fill="currentColor"><path fill-rule="evenodd" d="M8.5 0 C12.6 0 15.6 2.8 17 6 C15.6 9.2 12.6 12 8.5 12 C4.4 12 1.4 9.2 0 6 C1.4 2.8 4.4 0 8.5 0 Z M8.5 2 C5.8 2 3.4 3.6 2.3 6 C3.4 8.4 5.8 10 8.5 10 C11.2 10 13.6 8.4 14.7 6 C13.6 3.6 11.2 2 8.5 2 Z"/><circle cx="8.5" cy="6" r="2.4"/></svg>
<svg style="left:1888.1px;top:311.2px;width:12.9px;height:16.6px;color:#1c1e28;" viewBox="0 0 12.9 16.6" preserveAspectRatio="none" fill="currentColor"><path fill-rule="evenodd" d="M6.45 0 C9.2 0 11 1.9 11 4.6 V8.3 H1.9 V4.6 C1.9 1.9 3.7 0 6.45 0 Z M6.45 2.5 C5.2 2.5 4.5 3.4 4.5 4.7 V8.3 H8.4 V4.7 C8.4 3.4 7.7 2.5 6.45 2.5 Z"/><path fill-rule="evenodd" d="M1.4 8 H11.5 C12.3 8 12.9 8.6 12.9 9.4 V15.2 C12.9 16 12.3 16.6 11.5 16.6 H1.4 C0.6 16.6 0 16 0 15.2 V9.4 C0 8.6 0.6 8 1.4 8 Z"/><path d="M6.45 10.2 a1.1 1.1 0 0 1 0.55 2.05 V14.6 H5.9 V12.25 A1.1 1.1 0 0 1 6.45 10.2 Z" fill="#272a34" opacity=".55"/></svg>
<svg style="left:1380.8999999999999px;top:344.0px;width:16.6px;height:16.5px;color:#fff;" viewBox="0 0 18 17" preserveAspectRatio="none" fill="currentColor"><path d="M0 0.6 C0 0.2 0.3 0 0.6 0 H6 L7.4 1.6 H14 V3 H2.4 L1 11 H0 Z"/><path d="M2.8 3.8 H16.6 L16 7.4 C13.4 6.4 10.4 8.2 10.4 11.2 L10.5 12.4 H1.2 Z"/><path fill-rule="evenodd" d="M14.4 8 C16.4 8 17.8 9.4 17.8 11.2 C17.8 13.2 15.8 15.4 14.4 17 C13 15.4 11 13.2 11 11.2 C11 9.4 12.4 8 14.4 8 Z M14.4 9.8 a1.4 1.4 0 1 0 0 2.8 a1.4 1.4 0 1 0 0 -2.8 Z"/></svg>
<svg style="left:1861px;top:346.2px;width:17px;height:12px;color:#fff;" viewBox="0 0 17 12" preserveAspectRatio="none" fill="currentColor"><path fill-rule="evenodd" d="M8.5 0 C12.6 0 15.6 2.8 17 6 C15.6 9.2 12.6 12 8.5 12 C4.4 12 1.4 9.2 0 6 C1.4 2.8 4.4 0 8.5 0 Z M8.5 2 C5.8 2 3.4 3.6 2.3 6 C3.4 8.4 5.8 10 8.5 10 C11.2 10 13.6 8.4 14.7 6 C13.6 3.6 11.2 2 8.5 2 Z"/><circle cx="8.5" cy="6" r="2.4"/></svg>
<svg style="left:1888.1px;top:344.2px;width:12.9px;height:16.6px;color:#1c1e28;" viewBox="0 0 12.9 16.6" preserveAspectRatio="none" fill="currentColor"><path fill-rule="evenodd" d="M6.45 0 C9.2 0 11 1.9 11 4.6 V8.3 H1.9 V4.6 C1.9 1.9 3.7 0 6.45 0 Z M6.45 2.5 C5.2 2.5 4.5 3.4 4.5 4.7 V8.3 H8.4 V4.7 C8.4 3.4 7.7 2.5 6.45 2.5 Z"/><path fill-rule="evenodd" d="M1.4 8 H11.5 C12.3 8 12.9 8.6 12.9 9.4 V15.2 C12.9 16 12.3 16.6 11.5 16.6 H1.4 C0.6 16.6 0 16 0 15.2 V9.4 C0 8.6 0.6 8 1.4 8 Z"/><path d="M6.45 10.2 a1.1 1.1 0 0 1 0.55 2.05 V14.6 H5.9 V12.25 A1.1 1.1 0 0 1 6.45 10.2 Z" fill="#272a34" opacity=".55"/></svg>
<svg style="left:1379.9px;top:376.0px;width:17.2px;height:17.2px;color:#fff;" viewBox="0 0 17.2 17.2" preserveAspectRatio="none" fill="currentColor"><path fill-rule="evenodd" d="M1.8 0 H14 A1.8 1.8 0 0 1 15.8 1.8 V12.4 H17.2 V14.4 A2.8 2.8 0 0 1 14.4 17.2 H4.2 A2.5 2.5 0 0 1 1.7 14.7 V3.9 H0 V1.8 A1.8 1.8 0 0 1 1.8 0 Z M3.2 1.5 V14.4 A1.1 1.1 0 0 0 5.4 14.4 V12.4 H14.3 V1.5 Z"/><path d="M7.7 4.7 L5.3 7 L7.7 9.3 M9.8 4.7 L12.2 7 L9.8 9.3" fill="none" stroke="currentColor" stroke-width="1.3"/></svg>
<svg style="left:1861px;top:378.2px;width:17px;height:12px;color:#fff;" viewBox="0 0 17 12" preserveAspectRatio="none" fill="currentColor"><path fill-rule="evenodd" d="M8.5 0 C12.6 0 15.6 2.8 17 6 C15.6 9.2 12.6 12 8.5 12 C4.4 12 1.4 9.2 0 6 C1.4 2.8 4.4 0 8.5 0 Z M8.5 2 C5.8 2 3.4 3.6 2.3 6 C3.4 8.4 5.8 10 8.5 10 C11.2 10 13.6 8.4 14.7 6 C13.6 3.6 11.2 2 8.5 2 Z"/><circle cx="8.5" cy="6" r="2.4"/></svg>
<svg style="left:1888.1px;top:376.2px;width:12.9px;height:16.6px;color:#1c1e28;" viewBox="0 0 12.9 16.6" preserveAspectRatio="none" fill="currentColor"><path fill-rule="evenodd" d="M6.45 0 C9.2 0 11 1.9 11 4.6 V8.3 H1.9 V4.6 C1.9 1.9 3.7 0 6.45 0 Z M6.45 2.5 C5.2 2.5 4.5 3.4 4.5 4.7 V8.3 H8.4 V4.7 C8.4 3.4 7.7 2.5 6.45 2.5 Z"/><path fill-rule="evenodd" d="M1.4 8 H11.5 C12.3 8 12.9 8.6 12.9 9.4 V15.2 C12.9 16 12.3 16.6 11.5 16.6 H1.4 C0.6 16.6 0 16 0 15.2 V9.4 C0 8.6 0.6 8 1.4 8 Z"/><path d="M6.45 10.2 a1.1 1.1 0 0 1 0.55 2.05 V14.6 H5.9 V12.25 A1.1 1.1 0 0 1 6.45 10.2 Z" fill="#272a34" opacity=".55"/></svg>
<span style="left:36.70px;top:11.00px;font-size:16px;letter-spacing:0.501px;color:#4b5169;">Concurrent Storage Tutorial</span>
<span style="left:310.60px;top:11.00px;font-size:16px;letter-spacing:0.309px;color:#1ba1e6;">Shared Storage</span>
<span style="left:50.40px;top:59.00px;font-size:16px;letter-spacing:0.267px;color:#f4f4f4;">Only View Keys in Current Project</span>
<span style="left:49.40px;top:84.00px;font-size:13px;letter-spacing:-0.248px;color:#8b8f9b;">Keys in Current Project</span>
<span style="left:197.80px;top:83.00px;font-size:14.5px;letter-spacing:0.346px;color:#dcdcdc;">Player</span>
<span style="left:246.60px;top:84.00px;font-size:16px;letter-spacing:1.628px;color:#6cc52c;">0/8</span>
<span style="left:318.30px;top:83.00px;font-size:14.5px;letter-spacing:0.398px;color:#dcdcdc;">Concurrent Player</span>
<span style="left:447.80px;top:84.00px;font-size:16px;letter-spacing:1.386px;color:#6cc52c;">0/16</span>
<span style="left:529.30px;top:83.00px;font-size:14.5px;letter-spacing:0.360px;color:#dcdcdc;">Concurrent Creator</span>
<span style="left:665.00px;top:84.00px;font-size:16px;letter-spacing:1.586px;color:#6cc52c;">1/16</span>
<span style="left:77.60px;top:131.00px;font-size:17px;letter-spacing:0.236px;color:#1ba1e6;">Name</span>
<span style="left:243.50px;top:131.00px;font-size:17px;letter-spacing:-0.088px;color:#1ba1e6;">Key Type</span>
<span style="left:519.60px;top:131.00px;font-size:17px;letter-spacing:-0.114px;color:#1ba1e6;">Date Created</span>
<span style="left:78.00px;top:198.00px;font-size:16.5px;letter-spacing:0.316px;color:#f4f4f4;">Total Players</span>
<span style="left:244.00px;top:198.00px;font-size:16.5px;letter-spacing:0.203px;color:#f4f4f4;">Concurrent Creator Storage</span>
<span style="left:519.70px;top:198.00px;font-size:16.5px;letter-spacing:0.211px;color:#f4f4f4;">Nov 22, 2021</span>
<span style="left:277.00px;top:696.00px;font-size:16px;letter-spacing:-0.022px;color:#fff;font-weight:700;-webkit-text-stroke:0;">Create New Shared Key</span>
<span style="left:763.40px;top:11.00px;font-size:16px;letter-spacing:0.775px;color:#1ba1e6;">Properties</span>
<span style="left:796.40px;top:57.00px;font-size:15px;letter-spacing:0.171px;color:#f4f4f4;">TotalPlayersServer</span>
<span style="left:771.00px;top:100.00px;font-size:15.5px;letter-spacing:-0.047px;color:#63656f;">Find Property by Name</span>
<span style="left:756.30px;top:150.00px;font-size:17px;letter-spacing:-0.403px;color:#1ba1e6;font-weight:700;-webkit-text-stroke:0;">Script</span>
<span style="left:755.30px;top:190.00px;font-size:17px;letter-spacing:0.034px;color:#ececec;">Script</span>
<span style="left:1076.80px;top:192.00px;font-size:15px;letter-spacing:0.136px;color:#e4e4e4;">TotalPlayersServer</span>
<span style="left:756.30px;top:276.00px;font-size:17px;letter-spacing:-0.632px;color:#1ba1e6;font-weight:700;-webkit-text-stroke:0;">Custom</span>
<span style="left:761.40px;top:317.00px;font-size:17px;letter-spacing:-0.102px;color:#ececec;">ScenesLookup</span>
<span style="left:1076.40px;top:318.00px;font-size:15px;letter-spacing:0.200px;color:#e4e4e4;">ScenesLookup</span>
<span style="left:761.20px;top:402.00px;font-size:17px;letter-spacing:-0.418px;color:#ececec;">Data</span>
<span style="left:991.00px;top:401.00px;font-size:15px;letter-spacing:-0.447px;color:#e4e4e4;">Data</span>
<span style="left:761.40px;top:439.00px;font-size:17px;letter-spacing:0.164px;color:#ececec;">TotalPlayers</span>
<span style="left:991.20px;top:438.00px;font-size:15px;letter-spacing:0.303px;color:#e4e4e4;">Total Players</span>
<span style="left:740.20px;top:493.00px;font-size:17px;letter-spacing:0.124px;color:#d6d6d6;">Copy the code below into the top of your script to access these custom</span>
<span style="left:739.20px;top:513.00px;font-size:17px;letter-spacing:0.262px;color:#d6d6d6;">parameters.</span>
<span style="left:959.30px;top:701.00px;font-size:16.5px;letter-spacing:-0.280px;color:#fff;font-weight:700;-webkit-text-stroke:0;">Add Custom Property</span>
<span style="left:1379.00px;top:11.00px;font-size:16px;letter-spacing:0.392px;color:#1ba1e6;">Hierarchy</span>
<span style="left:1354.50px;top:56.00px;font-size:16.5px;letter-spacing:0.398px;color:#e5841e;font-weight:700;-webkit-text-stroke:0;">Main</span>
<span style="left:1388.90px;top:98.00px;font-size:15.5px;letter-spacing:-0.678px;color:#63656f;">Search</span>
<span style="left:1394.70px;top:148.00px;font-size:17px;letter-spacing:0.487px;color:#f0f0f0;">Misc</span>
<span style="left:1394.70px;top:181.00px;font-size:17px;letter-spacing:-0.543px;color:#f0f0f0;">Envir</span>
<span style="left:1394.70px;top:213.00px;font-size:17px;letter-spacing:0.315px;color:#f0f0f0;">Portals</span>
<span style="left:1394.70px;top:246.00px;font-size:17px;letter-spacing:0.210px;color:#f0f0f0;">Effects &amp; Post Process</span>
<span style="left:1394.70px;top:278.00px;font-size:17px;letter-spacing:0.131px;color:#f0f0f0;">Data (networked)</span>
<span style="left:1394.90px;top:311.00px;font-size:17px;letter-spacing:0.324px;color:#f0f0f0;">Scripts</span>
<span style="left:1408.00px;top:343.00px;font-size:17px;letter-spacing:-0.288px;color:#f0f0f0;">Client</span>
<span style="left:1408.00px;top:376.00px;font-size:17px;letter-spacing:-0.018px;color:#f0f0f0;">TotalPlayersServer</span>
</div></body></html>
